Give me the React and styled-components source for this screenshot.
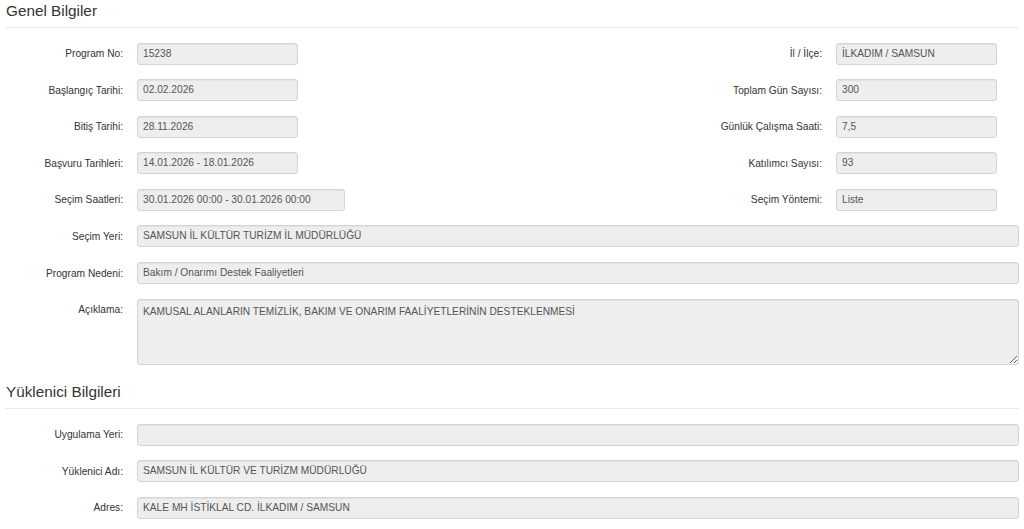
import styled, { createGlobalStyle } from "styled-components";

const GlobalStyle = createGlobalStyle`
  body {
    margin: 0;
    background: #fff;
    font-family: "Liberation Sans", Arial, sans-serif;
    color: #333;
  }
`;

const Page = styled.div`
  padding: 0 5px;
`;

const Section = styled.section`
  & + & {
    padding-top: 2px;
  }
`;

const SectionTitle = styled.h3`
  margin: 0;
  padding: 3px 1px 7px;
  font-size: 15.3px;
  line-height: 16.5px;
  font-weight: normal;
  color: #333;
  border-bottom: 1px solid #e8e8e8;
`;

const Fields = styled.div`
  margin-top: 15px;
`;

const PairRow = styled.div`
  display: flex;
  justify-content: space-between;
  padding-right: 22px;
  margin-bottom: 14.6px;
`;

const Field = styled.div`
  display: flex;
  align-items: ${(p) => (p.$top ? "flex-start" : "center")};
  gap: 14px;
  flex: ${(p) => (p.$grow ? 1 : "none")};
  margin-bottom: ${(p) => (p.$row ? "14.6px" : 0)};
`;

const Label = styled.label`
  width: ${(p) => p.$w || 118}px;
  flex: none;
  text-align: right;
  font-size: 10.2px;
  color: #333;
  padding-top: ${(p) => (p.$top ? "5px" : 0)};
`;

const Control = styled.div`
  box-sizing: border-box;
  width: ${(p) => (p.$w ? `${p.$w}px` : "auto")};
  flex: ${(p) => (p.$w ? "none" : 1)};
  min-width: 0;
  height: 22px;
  padding: 0 5px;
  font-size: 10.2px;
  line-height: 20px;
  white-space: nowrap;
  overflow: hidden;
  color: #555;
  background: #eee;
  border: 1px solid #d4d4d4;
  border-radius: 3px;
  box-shadow: inset 0 1px 1px rgba(0, 0, 0, 0.05);
`;

const TextArea = styled.textarea`
  box-sizing: border-box;
  flex: 1;
  height: 66px;
  padding: 5px 5px;
  font-family: "Liberation Sans", Arial, sans-serif;
  font-size: 10.2px;
  line-height: 1.3;
  color: #555;
  background: #eee;
  border: 1px solid #d4d4d4;
  border-radius: 3px;
  box-shadow: inset 0 1px 1px rgba(0, 0, 0, 0.05);
  outline: none;
  resize: vertical;
`;

const Pair = ({ left, right }) => (
  <PairRow>
    <Field>
      <Label>{left.label}</Label>
      <Control $w={left.w || 161}>{left.value}</Control>
    </Field>
    <Field>
      <Label $w={200}>{right.label}</Label>
      <Control $w={161}>{right.value}</Control>
    </Field>
  </PairRow>
);

const Full = ({ label, value }) => (
  <Field $grow $row>
    <Label>{label}</Label>
    <Control>{value}</Control>
  </Field>
);

const pairs = [
  [
    { label: "Program No:", value: "15238" },
    { label: "İl / İlçe:", value: "İLKADIM / SAMSUN" },
  ],
  [
    { label: "Başlangıç Tarihi:", value: "02.02.2026" },
    { label: "Toplam Gün Sayısı:", value: "300" },
  ],
  [
    { label: "Bitiş Tarihi:", value: "28.11.2026" },
    { label: "Günlük Çalışma Saati:", value: "7,5" },
  ],
  [
    { label: "Başvuru Tarihleri:", value: "14.01.2026 - 18.01.2026" },
    { label: "Katılımcı Sayısı:", value: "93" },
  ],
  [
    { label: "Seçim Saatleri:", value: "30.01.2026 00:00 - 30.01.2026 00:00", w: 208 },
    { label: "Seçim Yöntemi:", value: "Liste" },
  ],
];

const App = () => {
  return (
    <Page>
      <GlobalStyle />
      <Section>
        <SectionTitle>Genel Bilgiler</SectionTitle>
        <Fields>
          {pairs.map(([l, r]) => (
            <Pair key={l.label} left={l} right={r} />
          ))}
          <Full label="Seçim Yeri:" value="SAMSUN İL KÜLTÜR TURİZM İL MÜDÜRLÜĞÜ" />
          <Full label="Program Nedeni:" value="Bakım / Onarımı Destek Faaliyetleri" />
          <Field $grow $row $top>
            <Label $top>Açıklama:</Label>
            <TextArea
              readOnly
              value="KAMUSAL ALANLARIN TEMİZLİK, BAKIM VE ONARIM FAALİYETLERİNİN DESTEKLENMESİ"
            />
          </Field>
        </Fields>
      </Section>
      <Section>
        <SectionTitle>Yüklenici Bilgileri</SectionTitle>
        <Fields>
          <Full label="Uygulama Yeri:" value="" />
          <Full label="Yüklenici Adı:" value="SAMSUN İL KÜLTÜR VE TURİZM MÜDÜRLÜĞÜ" />
          <Full label="Adres:" value="KALE MH İSTİKLAL CD. İLKADIM / SAMSUN" />
        </Fields>
      </Section>
    </Page>
  );
};

export default App;
